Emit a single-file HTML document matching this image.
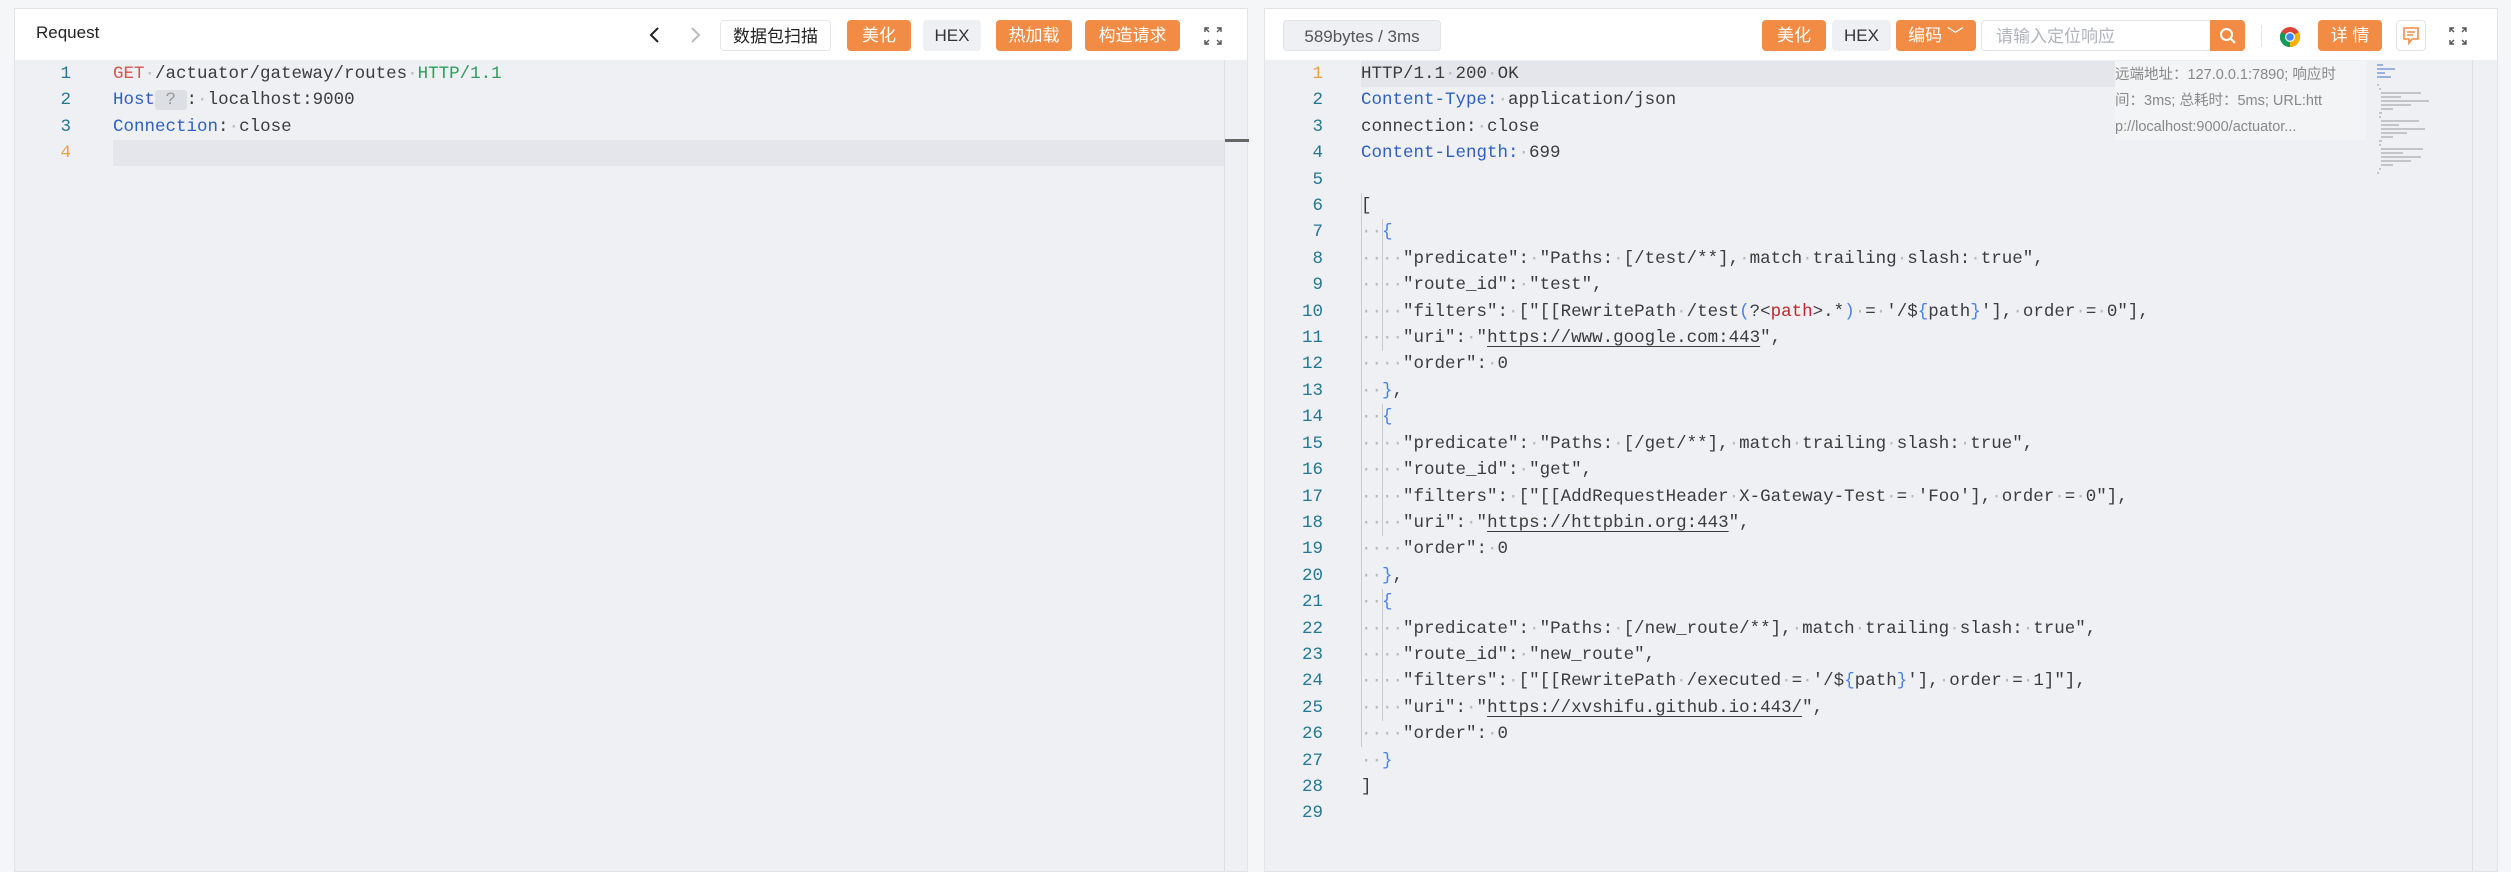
<!DOCTYPE html>
<html><head><meta charset="utf-8"><style>
*{margin:0;padding:0;box-sizing:border-box}
body{width:2511px;height:872px;background:#f5f6f8;position:relative;overflow:hidden;font-family:"Liberation Sans","Noto Sans CJK SC",sans-serif}
.panel{position:absolute;top:8px;bottom:0;background:#eef0f4;border:1px solid #e2e4e8}
.hdr{position:absolute;left:0;right:0;top:0;height:51px;background:#fff}
.btn{position:absolute;top:11px;height:31px;line-height:31px;font-size:17px;text-align:center;border-radius:4px}
.or{background:#f28c45;color:#fff}
.gr{background:#eef0f4;color:#333}
.code{position:absolute;font:17.5px "Liberation Mono",monospace;line-height:26.4px;white-space:pre;color:#3c3c3c}
.num{position:absolute;font:17.5px "Liberation Mono",monospace;line-height:26.4px;text-align:right;color:#237893;white-space:pre}
i{font-style:normal;color:#b4b8c0}
.k{color:#2f5fbf}
.b{color:#4a7ff0}
.u{text-decoration:underline;text-underline-offset:4px}
.hl{position:absolute;background:#e4e6eb;height:26.4px}
</style></head><body>

<!-- LEFT -->
<div class="panel" style="left:14px;width:1234px">
 <div class="hdr">
  <div style="position:absolute;left:21px;top:14px;font-size:17px;color:#222">Request</div>
  <svg style="position:absolute;left:630px;top:16px" width="20" height="20"><path d="M13 3 L6 10 L13 17" stroke="#222" stroke-width="2" fill="none"/></svg>
  <svg style="position:absolute;left:670px;top:16px" width="20" height="20"><path d="M7 3 L14 10 L7 17" stroke="#bbb" stroke-width="2" fill="none"/></svg>
  <div class="btn" style="left:705px;width:111px;background:#fff;border:1px solid #e5e7eb;color:#222">数据包扫描</div>
  <div class="btn or" style="left:832px;width:64px">美化</div>
  <div class="btn gr" style="left:908px;width:58px">HEX</div>
  <div class="btn or" style="left:981px;width:76px">热加载</div>
  <div class="btn or" style="left:1070px;width:95px">构造请求</div>
  <svg style="position:absolute;left:1189px;top:18px" width="18" height="18" fill="none" stroke="#555" stroke-width="1.4"><path d="M1 5V1h4M1 1l4 4M17 5V1h-4M17 1l-4 4M1 13v4h4M1 17l4-4M17 13v4h-4M17 17l-4-4"/></svg>
 </div>
 <div class="hl" style="left:98px;width:1112px;top:131px"></div>
 <div style="position:absolute;left:1209px;top:51px;bottom:0;border-left:1px solid #dcdfe4"></div>
 <div style="position:absolute;left:1210px;top:130px;width:24px;height:3px;background:#666"></div>
 <div class="num" style="left:20px;width:36px;top:52px">1
2
3
<span style="color:#e8a33d">4</span></div>
 <div class="code" style="left:98px;top:52px"><span style="color:#d9534f">GET</span><i>·</i>/actuator/gateway/routes<i>·</i><span style="color:#2e9e5b">HTTP/1.1</span>
<span class="k">Host</span><span style="background:#dcdfe4;color:#999;border-radius:3px"> ? </span>:<i>·</i>localhost:9000
<span class="k">Connection</span>:<i>·</i>close
</div>
</div>

<!-- RIGHT -->
<div class="panel" style="left:1264px;width:1234px">
 <div class="hdr">
  <div class="btn gr" style="left:18px;width:158px;color:#555;border:1px solid #e2e4e8">589bytes / 3ms</div>
  <div class="btn or" style="left:497px;width:64px">美化</div>
  <div class="btn gr" style="left:567px;width:59px">HEX</div>
  <div class="btn or" style="left:631px;width:80px">编码 ﹀</div>
  <div class="btn" style="left:716px;width:230px;border:1px solid #e2e4e8;text-align:left;padding-left:14px;color:#b0b4bb">请输入定位响应</div>
  <div class="btn or" style="left:945px;width:35px;border-radius:0 4px 4px 0"><svg width="18" height="18" style="margin-top:7px" fill="none" stroke="#fff" stroke-width="2"><circle cx="7.5" cy="7.5" r="5.5"/><path d="M11.5 11.5L16 16"/></svg></div>
  <div style="position:absolute;left:996px;top:16px;height:22px;border-left:1px solid #e2e4e8"></div>
  <svg style="position:absolute;left:1014px;top:17px" width="22" height="22" viewBox="0 0 22 22"><circle cx="11" cy="11" r="10" fill="#db4437"/><path d="M11 11 L2.3 6 A10 10 0 0 0 11 21Z" fill="#0f9d58"/><path d="M11 11 L11 21 A10 10 0 0 0 19.7 6Z" fill="#f4b400"/><circle cx="11" cy="11" r="5" fill="#fff"/><circle cx="11" cy="11" r="3.8" fill="#4285f4"/></svg>
  <div class="btn or" style="left:1053px;width:64px">详 情</div>
  <div class="btn" style="left:1131px;width:30px;border:1px solid #e2e4e8;background:#fff"><svg width="16" height="18" style="margin-top:6px" fill="none" stroke="#f28c45" stroke-width="1.6"><path d="M1 1h14v11H9l-3 4v-4H1z M4 5h8M4 8h6"/></svg></div>
  <svg style="position:absolute;left:1184px;top:18px" width="18" height="18" fill="none" stroke="#555" stroke-width="1.4"><path d="M1 5V1h4M1 1l4 4M17 5V1h-4M17 1l-4 4M1 13v4h4M1 17l4-4M17 13v4h-4M17 17l-4-4"/></svg>
 </div>
 <div class="hl" style="left:96px;width:754px;top:52px"></div>
 <div style="position:absolute;left:1207px;top:51px;bottom:0;border-left:1px solid #dcdfe4"></div>
 <!-- indent guides -->
 <div style="position:absolute;left:96px;top:184px;height:554px;border-left:1px solid #c8ccd2"></div>
 <div style="position:absolute;left:117px;top:210px;height:132px;border-left:1px solid #c8ccd2"></div>
 <div style="position:absolute;left:117px;top:395px;height:132px;border-left:1px solid #c8ccd2"></div>
 <div style="position:absolute;left:117px;top:580px;height:132px;border-left:1px solid #c8ccd2"></div>
 <!-- info -->
 <div style="position:absolute;left:850px;top:52px;width:251px;height:79px;background:#f3f4f6;font-size:14.5px;line-height:26px;color:#888;padding-top:1px">远端地址：127.0.0.1:7890; 响应时<br>间：3ms; 总耗时：5ms; URL:htt<br>p://localhost:9000/actuator...</div>
 <!-- minimap -->
 <svg style="position:absolute;left:1110px;top:54px" width="70" height="120" stroke-width="1.2">
  <g stroke="#6a8ad8"><path d="M2 2h6M2 6h18M2 10h8M2 14h14"/></g>
  <g stroke="#aaa"><path d="M2 22h2M4 26h2M6 30h40M6 34h20M6 38h48M6 42h30M6 46h12M4 50h3M4 54h2M6 58h38M6 62h18M6 66h44M6 70h26M6 74h12M4 78h3M4 82h2M6 86h42M6 90h22M6 94h40M6 98h30M6 102h12M4 106h2M2 110h2"/></g>
 </svg>
 <div class="num" style="left:20px;width:38px;top:52px"><span style="color:#e8a33d">1</span>
2
3
4
5
6
7
8
9
10
11
12
13
14
15
16
17
18
19
20
21
22
23
24
25
26
27
28
29</div>
 <div class="code" style="left:96px;top:52px">HTTP/1.1<i>·</i>200<i>·</i>OK
<span class="k">Content-Type:</span><i>·</i>application/json
connection:<i>·</i>close
<span class="k">Content-Length:</span><i>·</i>699

[
<i>··</i><span class="b">{</span>
<i>····</i>"predicate":<i>·</i>"Paths:<i>·</i>[/test/**],<i>·</i>match<i>·</i>trailing<i>·</i>slash:<i>·</i>true",
<i>····</i>"route_id":<i>·</i>"test",
<i>····</i>"filters":<i>·</i>["[[RewritePath<i>·</i>/test<span class="b">(</span>?&lt;<span style="color:#c0282b">path</span>&gt;.*<span class="b">)</span><i>·</i>=<i>·</i>'/$<span class="b">{</span>path<span class="b">}</span>'],<i>·</i>order<i>·</i>=<i>·</i>0"],
<i>····</i>"uri":<i>·</i>"<span class="u">https://www.google.com:443</span>",
<i>····</i>"order":<i>·</i>0
<i>··</i><span class="b">}</span>,
<i>··</i><span class="b">{</span>
<i>····</i>"predicate":<i>·</i>"Paths:<i>·</i>[/get/**],<i>·</i>match<i>·</i>trailing<i>·</i>slash:<i>·</i>true",
<i>····</i>"route_id":<i>·</i>"get",
<i>····</i>"filters":<i>·</i>["[[AddRequestHeader<i>·</i>X-Gateway-Test<i>·</i>=<i>·</i>'Foo'],<i>·</i>order<i>·</i>=<i>·</i>0"],
<i>····</i>"uri":<i>·</i>"<span class="u">https://httpbin.org:443</span>",
<i>····</i>"order":<i>·</i>0
<i>··</i><span class="b">}</span>,
<i>··</i><span class="b">{</span>
<i>····</i>"predicate":<i>·</i>"Paths:<i>·</i>[/new_route/**],<i>·</i>match<i>·</i>trailing<i>·</i>slash:<i>·</i>true",
<i>····</i>"route_id":<i>·</i>"new_route",
<i>····</i>"filters":<i>·</i>["[[RewritePath<i>·</i>/executed<i>·</i>=<i>·</i>'/$<span class="b">{</span>path<span class="b">}</span>'],<i>·</i>order<i>·</i>=<i>·</i>1]"],
<i>····</i>"uri":<i>·</i>"<span class="u">https://xvshifu.github.io:443/</span>",
<i>····</i>"order":<i>·</i>0
<i>··</i><span class="b">}</span>
]
</div>
</div>
</body></html>
